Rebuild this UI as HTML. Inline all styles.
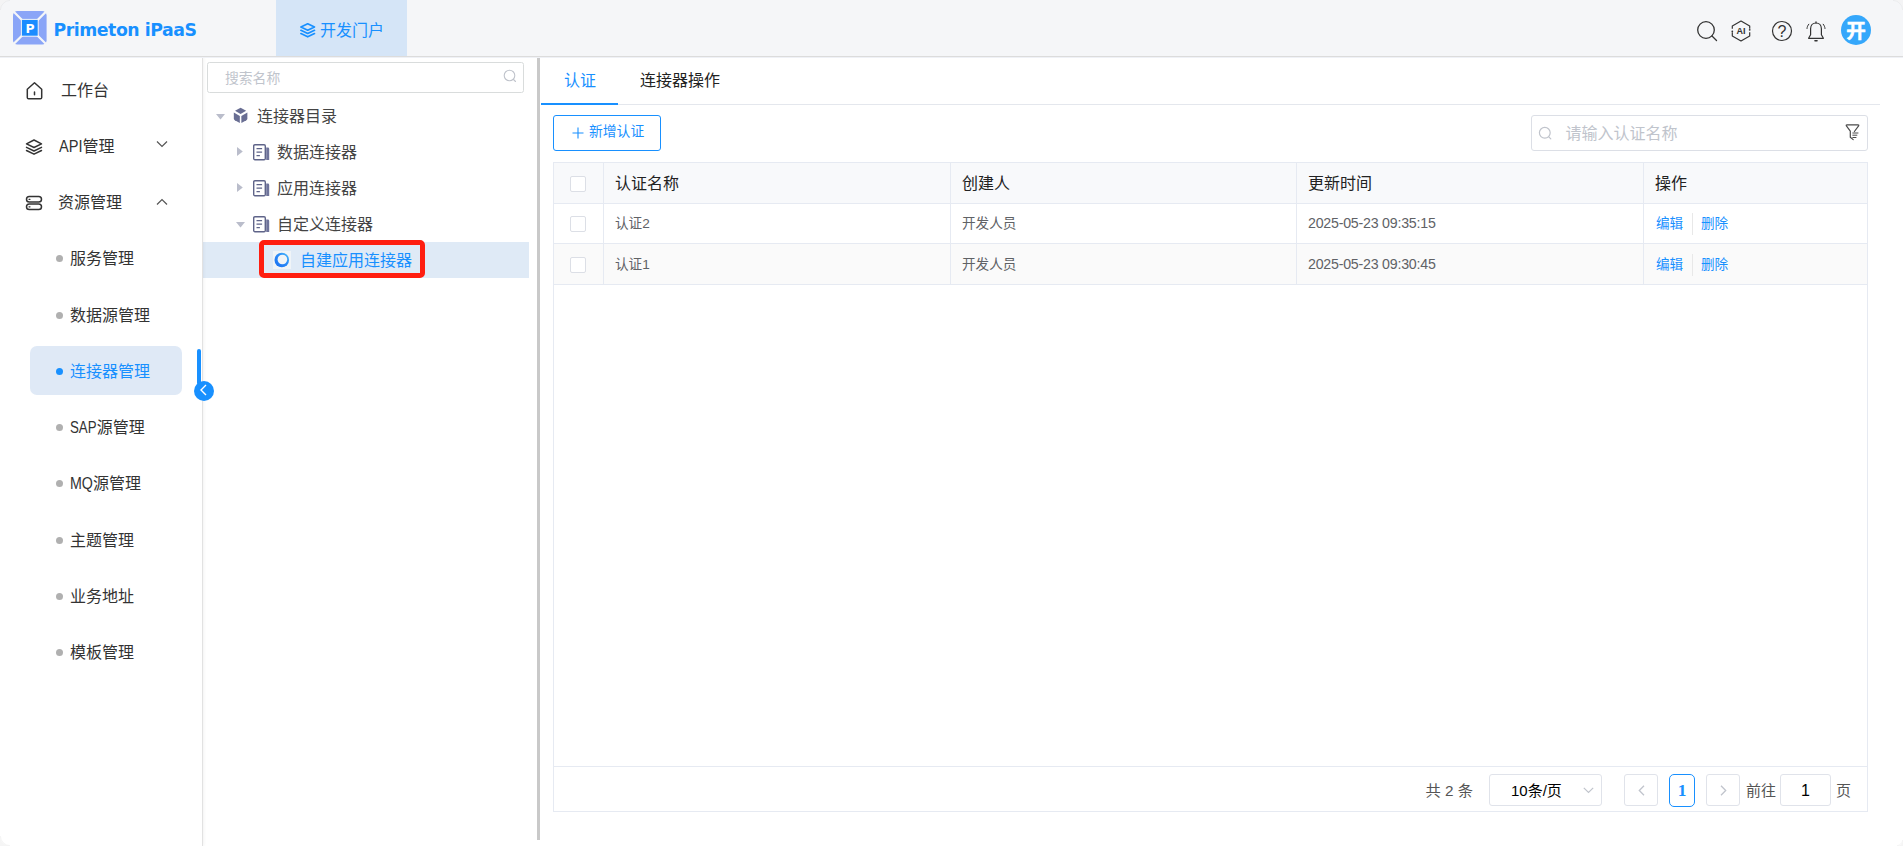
<!DOCTYPE html>
<html lang="zh-CN">
<head>
<meta charset="utf-8">
<title>Primeton iPaaS</title>
<style>
*{box-sizing:border-box;margin:0;padding:0}
html,body{width:1903px;height:846px;overflow:hidden;background:#fff}
body{font-family:"Liberation Sans","Noto Sans CJK SC",sans-serif;color:#333;position:relative;font-size:14px}
.abs{position:absolute}
/* header */
#hdr{position:absolute;left:0;top:0;width:1903px;height:57px;background:#f5f6f8;border-bottom:1px solid #dcdcdc;box-shadow:0 1px 0 #eff1f6;z-index:3}
#logo{position:absolute;left:13.200px;top:11.300px;width:33.600px;height:33.600px}
#brand{position:absolute;left:53.500px;top:18px;font-family:"DejaVu Sans","Liberation Sans",sans-serif;font-size:17.300px;font-weight:bold;color:#1890ff;line-height:24px;white-space:nowrap;letter-spacing:-0.450px}
#portal{position:absolute;left:276px;top:0;width:131px;height:56px;background:#d5e5f7;color:#1890ff;font-size:16px;line-height:56px;white-space:nowrap}
#portal svg{position:absolute;left:23px;top:22px;overflow:visible}
#portal span{position:absolute;left:44px;top:3px}
.hicon{position:absolute;top:20px}
#avatar{position:absolute;left:1841px;top:15px;width:30px;height:30px;border-radius:50%;background:#35a7fb;color:#fff;font-weight:bold;font-size:19.500px;line-height:33px;text-align:center;-webkit-text-stroke:0.500px #fff}
/* sidebar */
#side{position:absolute;left:0;top:57px;width:203px;height:789px;background:#fff;border-right:1px solid #e2e2e2;box-shadow:1px 0 3px rgba(0,0,0,0.050);z-index:2}
.m1{position:absolute;left:0;width:202px;height:56px;font-size:16px;color:#333;line-height:56px;white-space:nowrap}
.m1 svg.ic{position:absolute;left:25px;top:18px}
.m1 span{position:absolute;left:58px;top:0}
.m1 svg.ar{position:absolute;left:156px;top:22px}
.m2{position:absolute;left:30px;width:152px;height:48px;font-size:16px;color:#333;line-height:48px;border-radius:6px;white-space:nowrap}
.m2 i{position:absolute;left:26px;top:20px;width:7px;height:7px;border-radius:50%;background:#b0b0b0}
.m2 span{position:absolute;left:40px;top:0}
.m2.on{color:#1890ff}
#onbg{position:absolute;left:30px;top:289px;width:152px;height:49px;border-radius:7px;background:#dfe9f6}
.m2.on i{background:#1890ff}
/* tree */
#tree{position:absolute;left:203px;top:57px;width:334px;height:789px;background:#fff}
#tsearch{position:absolute;left:4px;top:5px;width:317px;height:31px;border:1px solid #d9dcdc;border-radius:2.500px;font-size:13.800px;color:#c0c4cc;line-height:31px;padding-left:17px}
.tn{position:absolute;left:0;width:326px;height:36px;font-size:16px;line-height:36px;color:#444;white-space:nowrap}
.tn span{position:absolute;top:1px}
.tn svg{position:absolute}
#divider{position:absolute;left:537px;top:58px;width:3px;height:782px;background:#c9c9c9}
/* main */
#main{position:absolute;left:541px;top:57px;width:1362px;height:789px}

#tsearch svg{position:absolute;right:6px;top:6px}
.tn.sel{background:#dfeaf6;color:#1890ff;width:326px}
.icbg{position:absolute;left:70px;top:9px;width:18px;height:18px;background:#f0f4f7}
#redbox{position:absolute;left:55.500px;top:183.300px;width:166.600px;height:38.100px;border:5px solid #ff1e10;border-radius:5px}
#collapse{z-index:5;position:absolute;left:194px;top:381px;width:20px;height:20px;border-radius:50%;background:#1890ff}
#collapse svg{position:absolute;left:5px;top:3.300px}
/* tabs */
.tab{position:absolute;top:13px;font-size:16px;line-height:22px;white-space:nowrap}
#tabline{position:absolute;left:0;top:47px;width:1339px;height:1px;background:#e4e7ed}
#tabbar{position:absolute;left:0;top:46px;width:77px;height:2px;background:#1890ff}
#addbtn{position:absolute;left:12px;top:58px;width:108px;height:36px;border:1px solid #1890ff;border-radius:3px;color:#1890ff;font-size:14px;line-height:34px;white-space:nowrap;background:#fff}
#addbtn svg{position:absolute;left:18px;top:11px}
#addbtn span{position:absolute;left:35px;top:-1px;font-size:13.800px}
#msearch{position:absolute;left:990px;top:58px;width:337px;height:36px;border:1px solid #dcdfe6;border-radius:3px;font-size:16px;line-height:34px;color:#c0c4cc;white-space:nowrap}
#msearch span{position:absolute;left:33.500px;top:1px}
#msearch svg.s{position:absolute;left:6px;top:9.500px}
#msearch svg.f{position:absolute;left:313px;top:7px}
/* table */
#tbl{position:absolute;left:12px;top:105px;width:1315px;height:650px;border:1px solid #e6eaf2}
.tr{position:absolute;left:0;width:1313px;border-bottom:1px solid #e6eaf2}
.td{position:absolute;top:0;height:100%;border-left:1px solid #e6eaf2;white-space:nowrap}
.td span{position:absolute;left:11px}
.th .td span{font-size:16px;color:#222;line-height:40px;top:1px}
.trow .td span{font-size:13.600px;color:#606266;line-height:39px;top:0}
.cb{position:absolute;left:16px;width:16px;height:16px;border:1px solid #dcdfe6;border-radius:2px;background:#fff}
.lnk{color:#1890ff!important}
.sep{position:absolute;left:48px;top:9px;width:1px;height:22px;background:#e8e8e8}
/* pagination */
#pgline{position:absolute;left:0;top:603px;width:1313px;height:1px;background:#e6eaf2}
.pg{position:absolute;top:611px;height:32px;line-height:30px;font-size:15px;color:#555;white-space:nowrap}
.pbox{border:1px solid #e0e3ea;border-radius:3px;background:#fff}
.sq{display:inline-block;font-weight:normal;transform-origin:left center}
.r2 .td span{top:1px}
.r2 .sep{top:10px}
.trow .td span.dt{font-size:14.200px;letter-spacing:-0.220px}
.corner{position:absolute;width:10px;height:10px;overflow:hidden;z-index:10}
.corner i{position:absolute;width:20px;height:20px;border-radius:50%;border:1px solid rgba(0,0,0,0.040);box-shadow:0 0 0 10px rgba(244,244,244,0.900)}
</style>
</head>
<body>

<div id="hdr">
  <svg id="logo" viewBox="0 0 34 34">
    <rect x="0" y="0" width="34" height="34" rx="4.500" fill="#8aa5f7"/>
    <path d="M0 0L34 34M34 0L0 34" stroke="#f5f6f8" stroke-width="2.200"/>
    <rect x="8" y="8" width="18" height="18" fill="#f5f6f8"/>
    <rect x="9" y="9" width="16" height="16" fill="#1b8cff"/>
    <text x="17.200" y="22.300" font-family="DejaVu Sans,Liberation Sans,sans-serif" font-weight="bold" font-size="12.500" fill="#fff" text-anchor="middle">P</text>
  </svg>
  <div id="brand">Primeton iPaaS</div>
  <div id="portal">
    <svg width="18" height="16" viewBox="0 0 18 16" fill="none" stroke="#1890ff" stroke-width="1.700" stroke-linejoin="round" stroke-linecap="round"><path d="M8.700 1.800L15.500 5 8.700 8.200 1.900 5z"/><path d="M1.900 8.300L8.700 11.500 15.500 8.300"/><path d="M1.900 11.600L8.700 14.800 15.500 11.600"/></svg>
    <span>开发门户</span>
  </div>
  <svg class="hicon" style="left:1696px" width="22" height="22" viewBox="0 0 22 22" fill="none" stroke="#333" stroke-width="1.3" stroke-linecap="round"><circle cx="10" cy="10" r="8.300"/><path d="M16 16l4.500 4.500"/></svg>
  <svg class="hicon" style="left:1730px" width="22" height="22" viewBox="0 0 22 22" fill="none" stroke="#333" stroke-width="1.200" stroke-linejoin="round"><path d="M2.300 8.800V5.900L11 1l8.700 4.900v2.900M19.700 12.200v3.900L11 21l-8.700-4.900v-3.900"/><circle cx="2.300" cy="11.300" r="0.900" fill="#333" stroke="none"/><circle cx="19.700" cy="9.800" r="0.900" fill="#333" stroke="none"/><text x="11" y="14.200" font-family="Liberation Sans,sans-serif" font-weight="bold" font-size="9" fill="#333" stroke="none" text-anchor="middle">AI</text></svg>
  <svg class="hicon" style="left:1771px" width="22" height="22" viewBox="0 0 22 22" fill="none" stroke="#333" stroke-width="1.2"><circle cx="11" cy="11" r="9.500"/><text x="11" y="16.500" font-family="Liberation Sans,sans-serif" font-size="16" fill="#333" stroke="none" text-anchor="middle">?</text></svg>
  <svg class="hicon" style="left:1805px" width="22" height="24" viewBox="0 0 22 24" fill="none" stroke="#333" stroke-width="1.200" stroke-linecap="round" stroke-linejoin="round"><path d="M11 3c-3.400 0-5.400 2.600-5.400 5.800v6L3.600 18.300h14.800l-2-3.500v-6C16.400 5.600 14.400 3 11 3z"/><path d="M11 1.800V3"/><path d="M10 20.800h2" stroke-width="1.600"/><path d="M3.800 4.200C2.700 5.500 2.100 7 2 8.500M18.200 4.200c1.100 1.300 1.700 2.800 1.800 4.300" stroke-width="1"/></svg>
  <div id="avatar">开</div>
</div>

<div id="side">
  <div class="m1" style="top:6px"><svg class="ic" width="20" height="20" viewBox="0 0 20 20" fill="none" stroke="#333" stroke-width="1.500" stroke-linejoin="round" stroke-linecap="round"><path d="M2.300 8.200L9.500 1.800l7.200 6.400v8.300a1.300 1.300 0 0 1-1.300 1.300H3.600a1.300 1.300 0 0 1-1.300-1.300z"/><path d="M9.500 11v2.800"/></svg><span style="left:61px">工作台</span></div>
  <div class="m1" style="top:62px"><svg class="ic" style="left:24px" width="20" height="20" viewBox="0 0 20 20" fill="none" stroke="#333" stroke-width="1.500" stroke-linejoin="round" stroke-linecap="round"><path d="M10 3L17.500 6.800 10 10.500 2.500 6.800z"/><path d="M2.500 10.300L10 14 17.500 10.300"/><path d="M2.500 13.500L10 17.200 17.500 13.500"/></svg><span style="left:59px"><b class="sq" style="transform:scaleX(.91);margin-right:-2.300px">API</b>管理</span><svg class="ar" style="top:21px" width="12" height="8" viewBox="0 0 12 8" fill="none" stroke="#555" stroke-width="1.200"><path d="M1 1.500l5 5 5-5"/></svg></div>
  <div class="m1" style="top:118px"><svg class="ic" style="left:24px" width="20" height="20" viewBox="0 0 20 20" fill="none" stroke="#333" stroke-width="1.500"><rect x="2.500" y="3.500" width="15" height="5.600" rx="2.800"/><rect x="2.500" y="11" width="15" height="5.600" rx="2.800"/><path d="M5 6.300h1M5 13.800h1" stroke-linecap="round" stroke-width="1.200"/></svg><span>资源管理</span><svg class="ar" style="top:22.500px" width="12" height="8" viewBox="0 0 12 8" fill="none" stroke="#555" stroke-width="1.200"><path d="M1 6.500l5-5 5 5"/></svg></div>
  <div id="onbg"></div>
  <div class="m2" style="top:178px"><i></i><span>服务管理</span></div>
  <div class="m2" style="top:235px"><i></i><span>数据源管理</span></div>
  <div class="m2 on" style="top:291px"><i></i><span>连接器管理</span></div>
  <div class="m2" style="top:347px"><i></i><span><b class="sq" style="transform:scaleX(.83);margin-right:-5.400px">SAP</b>源管理</span></div>
  <div class="m2" style="top:403px"><i></i><span><b class="sq" style="transform:scaleX(.89);margin-right:-2.800px">MQ</b>源管理</span></div>
  <div class="m2" style="top:460px"><i></i><span>主题管理</span></div>
  <div class="m2" style="top:516px"><i></i><span>业务地址</span></div>
  <div class="m2" style="top:572px"><i></i><span>模板管理</span></div>
</div>
<div class="abs" style="z-index:4;left:197.300px;top:349px;width:3.700px;height:36px;background:#1890ff;border-radius:2px"></div>

<div id="collapse"><svg width="9" height="12" viewBox="0 0 9 12" fill="none" stroke="#fff" stroke-width="1.400"><path d="M7 1L2 6l5 5"/></svg></div>
<div id="tree">
  <div id="tsearch">搜索名称<svg width="14" height="14" viewBox="0 0 14 14" fill="none" stroke="#c0c4cc" stroke-width="1.1" stroke-linecap="round"><circle cx="6.500" cy="6.500" r="5.300"/><path d="M10.500 10.500l2 2"/></svg></div>
  <div class="tn" style="top:41px"><svg class="tarr" style="left:13px;top:16px" width="9" height="6" viewBox="0 0 9 6"><path d="M0 0h9L4.500 5.500z" fill="#babdcb"/></svg>
    <svg style="left:29.400px;top:9.300px" width="17.200" height="17.200" viewBox="0 0 16 16" fill="#696e93"><path d="M8 0.800L13.200 3.600 8 6.600 2.800 3.600z"/><path d="M1.700 5.200L7.300 8.300V15L2.600 12.300a1.800 1.800 0 0 1-.9-1.500z"/><path d="M14.300 5.200L8.700 8.300V15l4.700-2.700a1.800 1.800 0 0 0 .9-1.500z"/></svg>
    <span style="left:54px">连接器目录</span></div>
  <div class="tn" style="top:77px"><svg style="left:34px;top:13px" width="6" height="9" viewBox="0 0 6 9"><path d="M0 0v9L5.800 4.500z" fill="#babdcb"/></svg><svg class="doc" style="left:50px;top:10px" width="17" height="17" viewBox="0 0 17 17"><rect x="0.700" y="0.700" width="11.600" height="15" rx="1.200" fill="none" stroke="#5f6489" stroke-width="1.400"/><path d="M3.500 4.700h5.600M3.500 8.200h5.600M3.500 11.700h3.400" stroke="#5f6489" stroke-width="1.300" fill="none"/><path d="M13.200 3.600h1.600a1.400 1.400 0 0 1 1.400 1.400v11h-3z" fill="#6f749b"/></svg><span style="left:74px">数据连接器</span></div>
  <div class="tn" style="top:113px"><svg style="left:34px;top:13px" width="6" height="9" viewBox="0 0 6 9"><path d="M0 0v9L5.800 4.500z" fill="#babdcb"/></svg><svg class="doc" style="left:50px;top:10px" width="17" height="17" viewBox="0 0 17 17"><rect x="0.700" y="0.700" width="11.600" height="15" rx="1.200" fill="none" stroke="#5f6489" stroke-width="1.400"/><path d="M3.500 4.700h5.600M3.500 8.200h5.600M3.500 11.700h3.400" stroke="#5f6489" stroke-width="1.300" fill="none"/><path d="M13.200 3.600h1.600a1.400 1.400 0 0 1 1.400 1.400v11h-3z" fill="#6f749b"/></svg><span style="left:74px">应用连接器</span></div>
  <div class="tn" style="top:149px"><svg style="left:33px;top:16px" width="9" height="6" viewBox="0 0 9 6"><path d="M0 0h9L4.500 5.500z" fill="#babdcb"/></svg><svg class="doc" style="left:50px;top:10px" width="17" height="17" viewBox="0 0 17 17"><rect x="0.700" y="0.700" width="11.600" height="15" rx="1.200" fill="none" stroke="#5f6489" stroke-width="1.400"/><path d="M3.500 4.700h5.600M3.500 8.200h5.600M3.500 11.700h3.400" stroke="#5f6489" stroke-width="1.300" fill="none"/><path d="M13.200 3.600h1.600a1.400 1.400 0 0 1 1.400 1.400v11h-3z" fill="#6f749b"/></svg><span style="left:74px">自定义连接器</span></div>
  <div class="tn sel" style="top:185px"><div class="icbg"></div><svg style="left:70px;top:9px" width="18" height="18" viewBox="0 0 18 18"><defs><linearGradient id="rg" x1="0" y1="1" x2="1" y2="0"><stop offset="0" stop-color="#1a6ef0"/><stop offset="0.600" stop-color="#2b8df8"/><stop offset="1" stop-color="#4fc3fb"/></linearGradient></defs><circle cx="8.800" cy="9" r="7.300" fill="url(#rg)"/><circle cx="9.400" cy="8.500" r="4.800" fill="#f0f4f7"/></svg><span style="left:97px">自建应用连接器</span></div>
  <div id="redbox"></div>
</div>
<div id="divider"></div>
<div id="main">
  <div class="tab" style="left:23px;color:#1890ff">认证</div>
  <div class="tab" style="left:99px;color:#222">连接器操作</div>
  <div id="tabline"></div><div id="tabbar"></div>
  <div id="addbtn"><svg width="12" height="12" viewBox="0 0 12 12" stroke="#1890ff" stroke-width="1.100"><path d="M6 0.500v11M0.500 6h11"/></svg><span>新增认证</span></div>
  <div id="msearch"><svg class="s" width="15" height="15" viewBox="0 0 15 15" fill="none" stroke="#c0c4cc" stroke-width="1.200" stroke-linecap="round"><circle cx="6.800" cy="6.800" r="5.400"/><path d="M10.800 10.800l2 2"/></svg><span>请输入认证名称</span><svg class="f" width="16" height="18" viewBox="0 0 16 18" fill="none" stroke="#4a4a4a" stroke-width="1.200" stroke-linejoin="round" stroke-linecap="round"><path d="M9.400 8.500L13.600 2.900Q14.200 1.900 13 1.900H2Q0.800 1.900 1.400 2.900L5.300 8.100V14.300L8.200 16.600"/><path d="M7.800 10h5.200M7.800 12.200h4.100M7.800 14.500h3.200" stroke-width="1"/></svg></div>
  <div id="tbl">
    <div class="tr th" style="top:0;height:41px;background:#f8f9fb">
      <div class="cb" style="top:13px"></div>
      <div class="td" style="left:49px;width:347px"><span>认证名称</span></div>
      <div class="td" style="left:396px;width:346px"><span>创建人</span></div>
      <div class="td" style="left:742px;width:347px"><span>更新时间</span></div>
      <div class="td" style="left:1089px;width:224px"><span>操作</span></div>
    </div>
    <div class="tr trow" style="top:41px;height:40px;background:#fff">
      <div class="cb" style="top:12px"></div>
      <div class="td" style="left:49px;width:347px"><span>认证2</span></div>
      <div class="td" style="left:396px;width:346px"><span>开发人员</span></div>
      <div class="td" style="left:742px;width:347px"><span class="dt">2025-05-23 09:35:15</span></div>
      <div class="td" style="left:1089px;width:224px"><span class="lnk" style="left:12px">编辑</span><i class="sep"></i><span class="lnk" style="left:57px">删除</span></div>
    </div>
    <div class="tr trow r2" style="top:81px;height:41px;background:#fafafa">
      <div class="cb" style="top:13px"></div>
      <div class="td" style="left:49px;width:347px"><span>认证1</span></div>
      <div class="td" style="left:396px;width:346px"><span>开发人员</span></div>
      <div class="td" style="left:742px;width:347px"><span class="dt">2025-05-23 09:30:45</span></div>
      <div class="td" style="left:1089px;width:224px"><span class="lnk" style="left:12px">编辑</span><i class="sep"></i><span class="lnk" style="left:57px">删除</span></div>
    </div>
    <div id="pgline"></div>
    <div class="pg" style="left:871.500px;line-height:34px;font-size:15.300px">共 2 条</div>
    <div class="pg pbox" style="left:935px;width:113px;color:#000"><span style="position:absolute;left:21px;top:1px">10条/页</span><svg style="position:absolute;left:93px;top:12px" width="11" height="7" viewBox="0 0 11 7" fill="none" stroke="#c0c4cc" stroke-width="1.200"><path d="M0.800 0.800l4.700 4.700 4.700-4.700"/></svg></div>
    <div class="pg pbox" style="left:1070px;width:34px"><svg style="position:absolute;left:13px;top:10px" width="7" height="11" viewBox="0 0 7 11" fill="none" stroke="#c0c4cc" stroke-width="1.300"><path d="M6 0.800L1.300 5.500 6 10.200"/></svg></div>
    <div class="pg pbox" style="left:1115px;top:610.500px;width:26px;height:33px;border-color:#1890ff;border-radius:5px;color:#1890ff;font-family:'Liberation Serif',serif;font-weight:bold;font-size:17.500px;text-align:center;line-height:31px">1</div>
    <div class="pg pbox" style="left:1152px;width:34px"><svg style="position:absolute;left:13px;top:10px" width="7" height="11" viewBox="0 0 7 11" fill="none" stroke="#c0c4cc" stroke-width="1.300"><path d="M1 0.800L5.700 5.500 1 10.200"/></svg></div>
    <div class="pg" style="left:1192px;line-height:34px">前往</div>
    <div class="pg pbox" style="left:1226px;width:51px;color:#000;text-align:center;font-size:16px;line-height:32px">1</div>
    <div class="pg" style="left:1282px;line-height:34px">页</div>
  </div>
</div>
<div class="corner" style="left:0;top:0"><i style="left:0;top:0"></i></div>
<div class="corner" style="left:1893px;top:0"><i style="left:-10px;top:0"></i></div>
<div class="corner" style="left:0;top:836px"><i style="left:0;top:-10px"></i></div>
<div class="corner" style="left:1897px;top:840px;width:6px;height:6px"><i style="left:-6px;top:-6px;width:12px;height:12px"></i></div>
</body>
</html>
